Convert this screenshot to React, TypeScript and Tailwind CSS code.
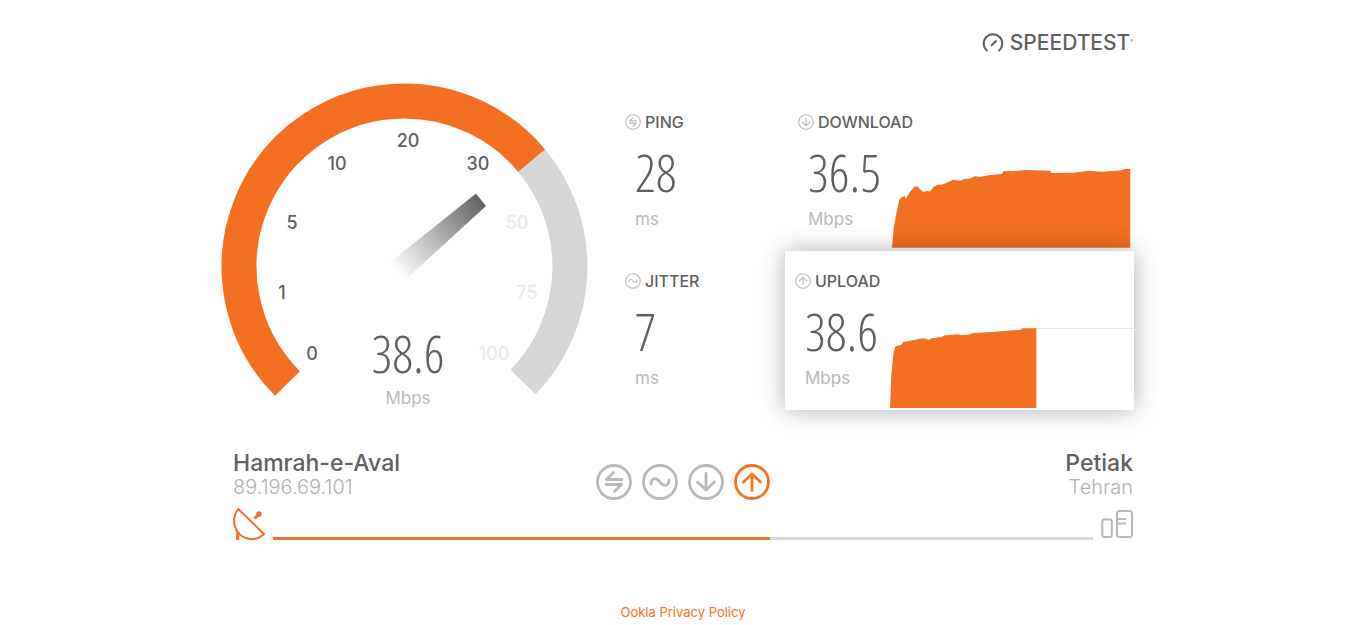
import type { ReactNode } from 'react'
import clsx from 'clsx'

type GlyphName = 'ping' | 'jitter' | 'download' | 'upload'

const glyphs: Record<GlyphName, string> = {
  ping: 'M26 15.5H10.5L17.5 8.5M10 20.5H25.5L18.5 27.5',
  jitter: 'M9 20C9.5 13.5 14.5 13 18 18S26.5 22.500 27 16',
  download: 'M18 9.5V26M9.5 18L18 26L26.5 18',
  upload: 'M18 26.5V10M9.5 18L18 10L26.5 18',
}

const gaugeLabels = [
  { text: '0', x: 91, y: 277, reached: true },
  { text: '1', x: 61, y: 216, reached: true },
  { text: '5', x: 71, y: 146, reached: true },
  { text: '10', x: 116, y: 87, reached: true },
  { text: '20', x: 187, y: 64, reached: true },
  { text: '30', x: 257, y: 87, reached: true },
  { text: '50', x: 296, y: 146, reached: false },
  { text: '75', x: 306, y: 216, reached: false },
  { text: '100', x: 273, y: 277, reached: false },
]

const downloadPoints =
  '2,79.7 3.7,60.3 6,47 9.3,32 11.3,29.3 13.3,29 14.3,27 15.7,30.7 20,23.7 25,18.3 27.3,18.5 31.7,22.7 34.7,24.3 35.7,23 40.3,23.3 43.3,19 48.3,16.7 51.7,16.7 56.7,14.7 63.3,11.7 66.7,12.5 71,12.5 74,11 80,10.5 85,8.3 90,9 100,7 111.7,6 114,3 123,3.3 135,2 160,2.7 161.7,5 183.3,4.7 198.3,2.7 211.7,3.7 232.7,2.3 233.7,1 240.3,1 240.3,79.7'

const uploadPoints =
  '0,80 1.3,47 3.3,26.3 5,19.3 6.7,18 11,17 13.3,14 20,12.7 25,11.7 31.7,10.3 36,10.7 39,12 41.7,10.3 51.7,9 55,7.3 68.3,6.3 70.7,7 78.3,6.7 83.3,5 101.7,4 123.3,2.3 131,2 132.3,0.3 146.3,0.2 146.3,80'

function StageIcon({ name, size = 'sm', active = false }: { name: GlyphName; size?: 'sm' | 'lg'; active?: boolean }) {
  return (
    <svg
      viewBox="0 0 36 36"
      fill="none"
      stroke="currentColor"
      strokeWidth={size === 'lg' ? 2.8 : 2.4}
      strokeLinecap="round"
      strokeLinejoin="round"
      className={clsx('shrink-0', size === 'lg' ? 'size-9' : 'size-4', active ? 'text-[#f36f21]' : 'text-[#b8b8b8]')}
      aria-hidden="true"
    >
      <circle cx="18" cy="18" r="16.5" />
      <path d={glyphs[name]} />
    </svg>
  )
}

function Gauge() {
  return (
    <svg viewBox="0 0 367 328" className="w-[367px] shrink-0" role="img" aria-label="Upload speed">
      <defs>
        <linearGradient id="needle" gradientUnits="userSpaceOnUse" x1="175" y1="189" x2="260" y2="117">
          <stop offset="0" stopColor="#fff" />
          <stop offset="1" stopColor="#636363" />
        </linearGradient>
      </defs>
      <path d="M66.5 300.5A165.5 165.5 0 0 1 183.5 18A165.5 165.5 0 0 1 310.7 77.7" fill="none" stroke="#f36f21" strokeWidth="35" />
      <path d="M310.7 77.7A165.5 165.5 0 0 1 302 299" fill="none" stroke="#d6d6d6" strokeWidth="35" />
      <path d="M167 181L255 110.5L265 123L183 198Z" fill="url(#needle)" />
      {gaugeLabels.map((label) => (
        <text
          key={label.text}
          x={label.x}
          y={label.y}
          textAnchor="middle"
          className={clsx('text-lg font-medium', label.reached ? 'fill-[#5f5f5f]' : 'fill-[#ebebeb]')}
        >
          {label.text}
        </text>
      ))}
      <text x="187" y="290" textAnchor="middle" className="fill-[#5f5f5f] font-['Open_Sans_Condensed_Light','Roboto_Condensed',sans-serif] text-[52px] font-thin">
        38.6
      </text>
      <text x="187" y="321" textAnchor="middle" className="fill-[#b8b8b8] text-[17px]">
        Mbps
      </text>
    </svg>
  )
}

function Metric({ icon, title, value, unit, className, children }: {
  icon: GlyphName
  title: string
  value: string
  unit: string
  className?: string
  children?: ReactNode
}) {
  return (
    <section className={clsx('flex h-[159px] flex-col pt-5', className)}>
      <h2 className="flex items-center gap-1 text-base leading-5 font-medium text-[#5f5f5f]">
        <StageIcon name={icon} />
        {title}
      </h2>
      <div className="flex flex-1 items-end justify-between">
        <div className="self-start pt-4 pl-[10px]">
          <p className="font-['Open_Sans_Condensed_Light','Roboto_Condensed',sans-serif] text-[52px] leading-12 font-thin text-[#5f5f5f]">{value}</p>
          <p className="mt-[11px] text-[17px] leading-6 text-[#b8b8b8]">{unit}</p>
        </div>
        {children}
      </div>
    </section>
  )
}

export default function App() {
  return (
    <div className="mx-auto max-w-[924px] bg-white pt-8 font-[Inter,sans-serif]">
      <header className="flex justify-end px-3">
        <div className="flex items-center gap-[6px] text-[#5f5f5f]">
          <svg viewBox="0 0 22 22" fill="none" stroke="currentColor" strokeWidth="2" className="size-[22px]" aria-hidden="true">
            <path d="M5.5 19A9.3 9.3 0 1 1 16.5 19" />
            <path d="M9 14L14.5 8.5" />
          </svg>
          <h1 className="text-[21px] leading-[22px] font-medium">
            SPEEDTEST<span className="align-super text-[4px] leading-none">®</span>
          </h1>
        </div>
      </header>

      <main>
        <div className="mt-[29px] flex">
          <Gauge />

          <div className="ml-[37px] w-40 shrink-0 pt-[9px]">
            <Metric icon="ping" title="PING" value="28" unit="ms" />
            <Metric icon="jitter" title="JITTER" value="7" unit="ms" />
          </div>

          <div className="mr-[11px] min-w-0 flex-1 pt-[9px]">
            <Metric icon="download" title="DOWNLOAD" value="36.5" unit="Mbps" className="pb-[3px] pl-[13px]">
              <svg viewBox="0 0 244 80" className="h-20 w-[244px] shrink-0" aria-hidden="true">
                <polygon points={downloadPoints} fill="#f36f21" />
              </svg>
            </Metric>
            <Metric
              icon="upload"
              title="UPLOAD"
              value="38.6"
              unit="Mbps"
              className="relative bg-white pb-[2px] pl-[10px] shadow-[0_0_24px_rgba(0,0,0,0.32)]"
            >
              <svg viewBox="0 0 244 80" className="h-20 w-[244px] shrink-0" aria-hidden="true">
                <path d="M146 0.5H244" stroke="#e6e6e6" />
                <polygon points={uploadPoints} fill="#f36f21" />
              </svg>
            </Metric>
          </div>
        </div>

        <div className="mt-10 grid grid-cols-[1fr_auto_1fr] px-3">
          <div>
            <p className="text-[23px] leading-6 font-medium text-[#5f5f5f]">Hamrah-e-Aval</p>
            <p className="text-xl leading-6 font-light text-[#b0b0b0]">89.196.69.101</p>
          </div>
          <div className="flex gap-[10px] pt-[13px]">
            <StageIcon name="ping" size="lg" />
            <StageIcon name="jitter" size="lg" />
            <StageIcon name="download" size="lg" />
            <StageIcon name="upload" size="lg" active />
          </div>
          <div className="text-right">
            <p className="text-[23px] leading-6 font-medium text-[#5f5f5f]">Petiak</p>
            <p className="text-xl leading-6 font-light text-[#b0b0b0]">Tehran</p>
          </div>
        </div>

        <div className="mt-2 flex items-end gap-2 px-3">
          <svg viewBox="0 0 32 32" fill="none" stroke="#f36f21" strokeWidth="2" strokeLinejoin="round" className="size-8 shrink-0" aria-hidden="true">
            <path d="M5.3 1C-1 9 0 20 7 26.5C14 32.5 24 33 31 26Z" />
            <path d="M4.7 24V32" strokeWidth="3" />
            <path d="M21.5 10.5L25.5 6.500" strokeWidth="3" />
            <circle cx="26" cy="6" r="1.700" fill="#f36f21" />
          </svg>
          <div className="h-[3px] flex-1 bg-[#d6d6d6]" role="progressbar" aria-label="Test progress" aria-valuenow={61}>
            <div className="h-full bg-[#f36f21]" style={{ width: '60.6%' }} />
          </div>
          <svg viewBox="0 0 32 32" fill="none" stroke="#b8b8b8" strokeWidth="2" className="size-8 shrink-0" aria-hidden="true">
            <rect x="1.3" y="11.5" width="9.5" height="17.5" rx="2" />
            <rect x="16" y="3" width="15" height="26" rx="2.5" />
            <path d="M16 11H25M16 15.500H25" />
          </svg>
        </div>
      </main>

      <footer className="mt-[59px] text-center">
        <a href="#privacy" className="text-[13px] leading-5 text-[#f36f21]">
          Ookla Privacy Policy
        </a>
      </footer>
    </div>
  )
}
